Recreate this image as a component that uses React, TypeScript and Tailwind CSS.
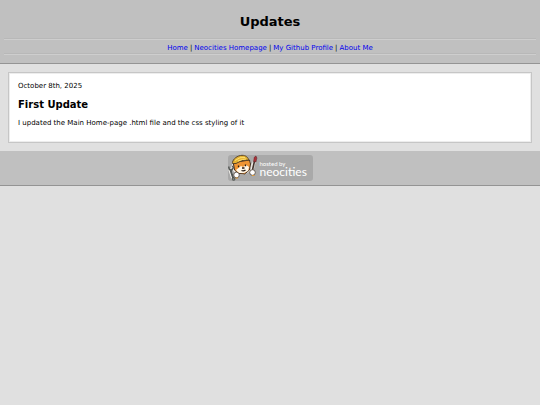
const links = ["Home", "Neocities Homepage", "My Github Profile", "About Me"];

function Divider() {
  return <hr className="box-content h-px border-0 border-b border-[#cecece] bg-[#b8b8b8]" />;
}

function CatLogo() {
  return (
    <svg viewBox="3 2 30 28" className="h-7 w-[30px] shrink-0" aria-hidden="true">
      <g stroke="#f4f1ec" strokeLinecap="round" strokeLinejoin="round" fill="#f4f1ec">
        <path d="M5 18l3 9M30 7l-3 11" strokeWidth="3" />
        <path d="M9 9l4-4 6-1 5 4 2 5-2 6-6 3-7-1-4-5z" strokeWidth="1.6" />
      </g>
      <path d="M8.5 12l1 6 4 3.5 6 .5 5-4 1-6-1-4-13 2z" fill="#ee9433" stroke="#3b291c" strokeWidth="1" strokeLinejoin="round" />
      <path d="M11 18l5-4 2 1 3-2 3 2-1 4-4 2-5 0z" fill="#fff6e6" />
      <path d="M7.5 11.5c-.5-3 3-7 8-8 4-.8 7 1 8.5 4.500l-7 .5-6 3z" fill="#e5b333" stroke="#5b4526" strokeWidth="1" strokeLinejoin="round" />
      <path d="M10 8.500q5-4 10-3M13 9q5-2 8-2" fill="none" stroke="#ffe070" strokeWidth="1" />
      <path d="M13.500 13.500v1.700M20.500 12.500v1.700M17 16h2.500M16.500 18.500q2 1 4-.5" stroke="#241913" strokeWidth="1.300" fill="none" />
      <path d="M5.500 18l3 9" stroke="#515552" strokeWidth="2" />
      <path d="M3.600 14.500l.8 3 2.300.6 1.600-2.400-.8-2" fill="none" stroke="#515552" strokeWidth="1.400" />
      <circle cx="8.500" cy="27" r="1.500" fill="#777b76" stroke="#454945" strokeWidth="0.700" />
      <path d="M29.500 9l-2 9" stroke="#40302b" strokeWidth="1.600" />
      <path d="M28.500 9.500l.6-4 1.800-1.500 1 2-1 4z" fill="#ad3038" stroke="#5e2428" strokeWidth="0.600" />
      <g fill="#fff" stroke="#51443a" strokeWidth="0.800">
        <circle cx="11.500" cy="23" r="2.800" />
        <circle cx="27.500" cy="20.500" r="2.800" />
      </g>
      <path d="M10.500 26h2.500M27 23.500h2.500" stroke="#d99635" strokeWidth="1.200" />
    </svg>
  );
}

export default function App() {
  return (
    <div className="min-h-screen bg-[#e0e0e0] text-[7px] leading-[9px] text-black [font-family:Verdana,'DejaVu_Sans',sans-serif]">
      <header className="border-b border-[#949494] bg-[#c0c0c0] px-1 pt-3 pb-2">
        <h1 className="mb-[7px] text-center text-[13px] leading-[19px] font-bold">Updates</h1>
        <Divider />
        <nav className="flex justify-center gap-[2px] pt-1">
          {links.map((label, i) => (
            <span key={label} className="flex gap-[2px]">
              {i > 0 && <span>|</span>}
              <a href="#" className="text-[#0000ee]">{label}</a>
            </span>
          ))}
        </nav>
        <Divider />
      </header>
      <main className="p-2">
        <div className="border border-[#c6c6c6]">
          <article className="border border-[#ededed] bg-white px-2 pt-2 pb-[13px]">
            <p>October 8th, 2025</p>
            <h2 className="my-2 text-[10px] leading-3 font-bold">First Update</h2>
            <p>I updated the Main Home-page .html file and the css styling of it</p>
          </article>
        </div>
      </main>
      <footer className="flex justify-center border-b border-[#949494] bg-[#c0c0c0] py-1">
        <a href="#" className="flex h-[26px] w-[85px] items-center gap-[2px] rounded-[3px] bg-[#a9a9a9] text-white [font-family:Lato,sans-serif]">
          <CatLogo />
          <span className="flex flex-col">
            <span className="text-[6px] leading-[7px]">hosted by</span>
            <span className="text-[12px] leading-[10px]">neocities</span>
          </span>
        </a>
      </footer>
    </div>
  );
}
